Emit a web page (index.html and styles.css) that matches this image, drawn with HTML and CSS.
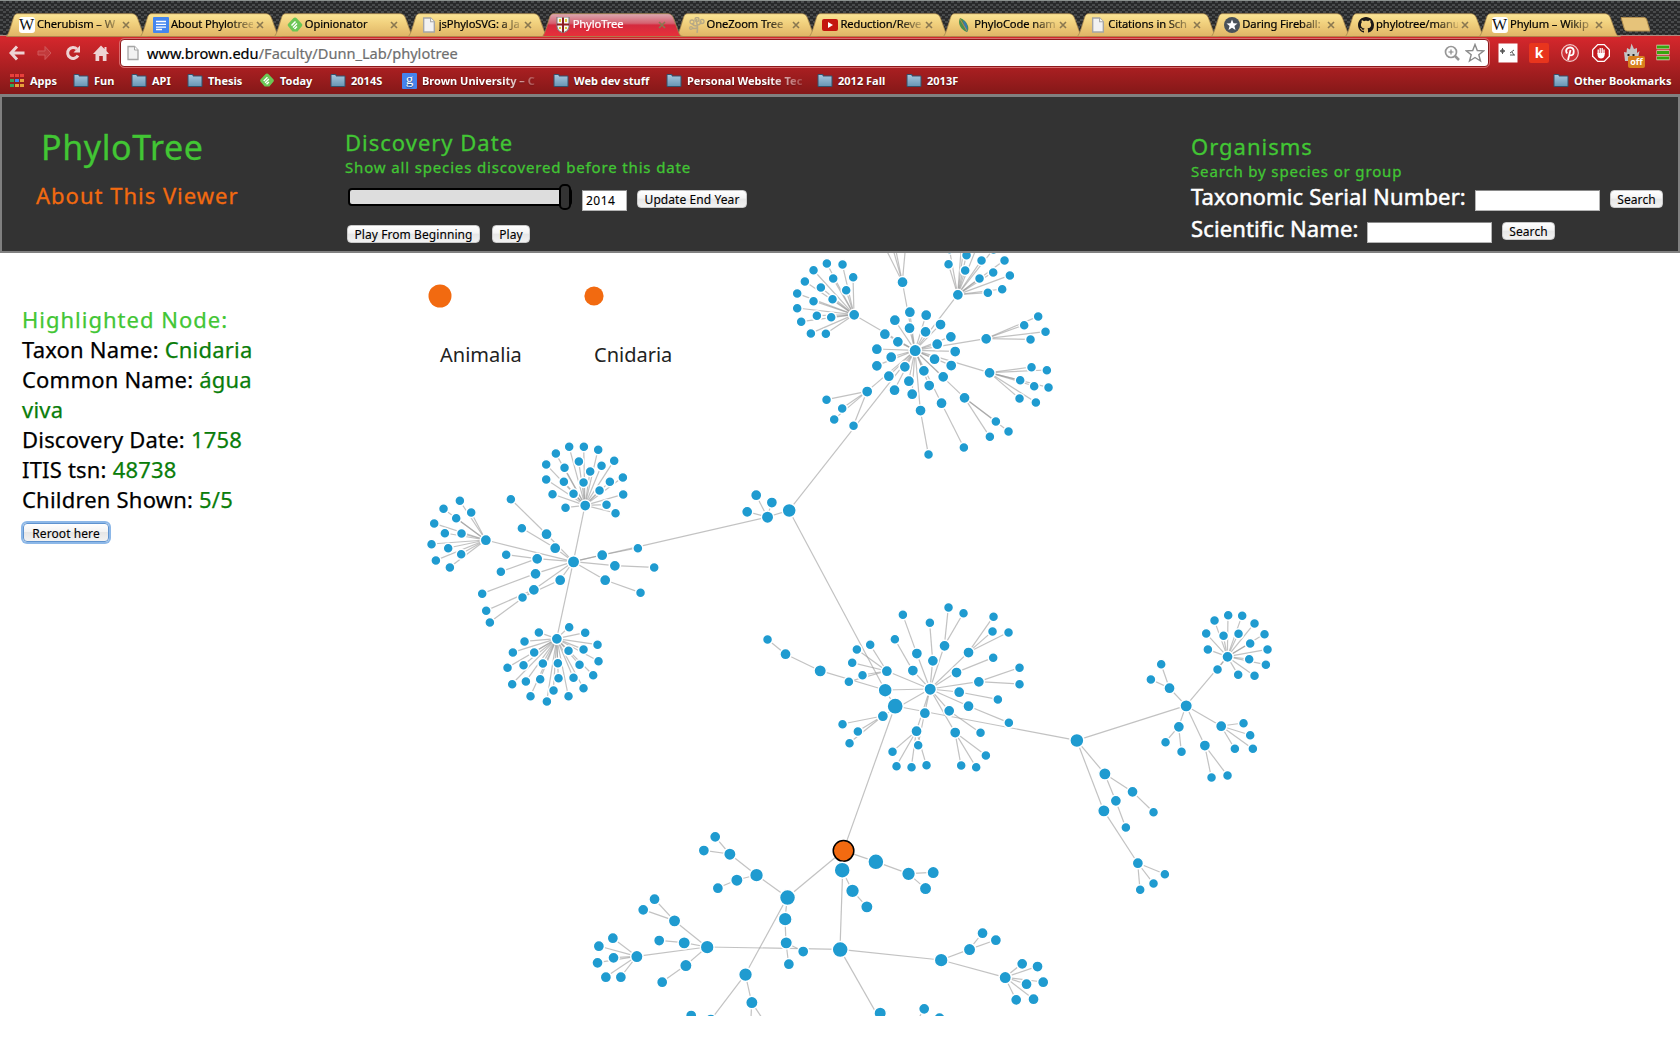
FILE: index.html
```html
<!DOCTYPE html>
<html lang="en">
<head>
<meta charset="utf-8">
<title>PhyloTree</title>
<link rel="stylesheet" href="styles.css">
</head>
<body>
<svg class="defs" width="0" height="0">
  <defs>
    <linearGradient id="gold" x1="0" y1="0" x2="0" y2="1"><stop offset="0" stop-color="#fbe596"/><stop offset=".45" stop-color="#f0cf7c"/><stop offset="1" stop-color="#dfb466"/></linearGradient>
    <linearGradient id="rose" x1="0" y1="0" x2="0" y2="1"><stop offset="0" stop-color="#dcaab2"/><stop offset=".42" stop-color="#d5606f"/><stop offset=".5" stop-color="#d42a3e"/><stop offset="1" stop-color="#e8303a"/></linearGradient>
    <linearGradient id="steel" x1="0" y1="0" x2="0" y2="1"><stop offset="0" stop-color="#a9c8dd"/><stop offset="1" stop-color="#6795b5"/></linearGradient>
    <symbol id="tab" viewBox="0 0 142 24"><path d="M.5 23.5 C3 20 4 16 6.500 8 C8 3 8.500 .7 12 .7 H125 C129 .7 130.500 2 132 6.500 L136.500 19 C137.500 22 139 23.500 141.500 23.500Z" stroke="#a8884e" stroke-width=".8"/></symbol>
    <symbol id="folder" viewBox="0 0 16 15"><path d="M1 3V1.500H6V3H15V13.500H1Z" fill="url(#steel)" stroke="#35516b"/></symbol>
    <symbol id="page" viewBox="0 0 12 15"><path d="M1 1H7.500L11 4.500V14H1Z" fill="#f2f2f2" stroke="#a5a5a5" stroke-width="1.300"/><path d="M7.500 1V4.500H11" fill="#fff" stroke="#a5a5a5"/></symbol>
    <symbol id="close" viewBox="0 0 8 8"><path d="M1 1L7 7M7 1L1 7" stroke="#8a7850" stroke-width="1.600"/></symbol>
    <symbol id="feedly" viewBox="0 0 16 16"><path d="M8 .5Q9 .5 9.700 1.300L15 7Q15.700 8 15 9L10.500 14.500H5.500L1 9Q.3 8 1 7L6.300 1.300Q7 .5 8 .5Z" fill="#6cc655"/><path d="M4.500 8.500L8.500 4.500M6 10.500L10 6.500M7.500 12L10 9.500" stroke="#fff" stroke-width="1.500"/></symbol>
  </defs>
</svg>

<header class="browser">
  <div class="tabs">
    <div class="tab"><svg class="shape"><use href="#tab"/></svg><span class="fav wiki">W</span><span class="label">Cherubism – W</span><svg class="close"><use href="#close"/></svg></div>
    <div class="tab"><svg class="shape"><use href="#tab"/></svg><svg class="fav" viewBox="0 0 16 16"><rect width="16" height="16" rx="1" fill="#4586ee"/><path d="M3 4.500H13M3 7.300H13M3 10.100H13M3 12.500H9" stroke="#fff" stroke-width="1.300"/></svg><span class="label">About Phylotree</span><svg class="close"><use href="#close"/></svg></div>
    <div class="tab"><svg class="shape"><use href="#tab"/></svg><svg class="fav"><use href="#feedly"/></svg><span class="label">Opinionator</span><svg class="close"><use href="#close"/></svg></div>
    <div class="tab"><svg class="shape"><use href="#tab"/></svg><svg class="fav"><use href="#page"/></svg><span class="label">jsPhyloSVG: a Ja</span><svg class="close"><use href="#close"/></svg></div>
    <div class="tab active"><svg class="shape"><use href="#tab"/></svg><svg class="fav" viewBox="0 0 16 16"><path d="M2 0H14V10Q14 14 8 16Q2 14 2 10Z" fill="#f6f6f0" stroke="#777"/><path d="M8 .5V15.500M2 7.500H14" stroke="#8e1f22" stroke-width="2"/><path d="M4 2H6V5H4ZM10 2H12V5H10ZM4 10H6V12H4ZM10 10H12V12H10Z" fill="#d8c838"/></svg><span class="label">PhyloTree</span><svg class="close"><use href="#close"/></svg></div>
    <div class="tab"><svg class="shape"><use href="#tab"/></svg><svg class="fav" viewBox="0 0 16 16"><path d="M8 16Q9 11 8 7M8 9Q4 9 3 6M8 8Q12 8 12 4M8 7Q7 4 8 2M3 11Q6 12 8 11" fill="none" stroke="#b7a986" stroke-width="1.500"/><g fill="none" stroke="#b7a986" stroke-width="1.300"><circle cx="3" cy="5" r="2"/><circle cx="8" cy="2.500" r="2"/><circle cx="13" cy="4.500" r="2"/><circle cx="2" cy="11" r="1.300"/></g></svg><span class="label">OneZoom Tree</span><svg class="close"><use href="#close"/></svg></div>
    <div class="tab"><svg class="shape"><use href="#tab"/></svg><svg class="fav" viewBox="0 0 16 16"><rect y="2" width="16" height="12" rx="2" fill="#c4160f"/><path d="M6 5L11 8L6 11Z" fill="#fff"/></svg><span class="label">Reduction/Reve</span><svg class="close"><use href="#close"/></svg></div>
    <div class="tab"><svg class="shape"><use href="#tab"/></svg><svg class="fav" viewBox="0 0 16 16"><path d="M4 1Q10 3 12 9Q13 13 11 15Q6 13 4 9Q2 5 4 1Z" fill="#4b8f4c"/><path d="M7 3Q13 7 11 15Q8 11 7 3Z" fill="#3a79ae"/><path d="M4 2L11 14" stroke="#bc8a4c"/></svg><span class="label">PhyloCode nam</span><svg class="close"><use href="#close"/></svg></div>
    <div class="tab"><svg class="shape"><use href="#tab"/></svg><svg class="fav"><use href="#page"/></svg><span class="label">Citations in Sch</span><svg class="close"><use href="#close"/></svg></div>
    <div class="tab"><svg class="shape"><use href="#tab"/></svg><svg class="fav" viewBox="0 0 16 16"><circle cx="8" cy="8" r="8" fill="#4a525a"/><path d="M8 2.500L9.500 6.300L13.500 6.500L10.400 9L11.500 13L8 10.700L4.500 13L5.600 9L2.500 6.500L6.500 6.300Z" fill="#fff"/></svg><span class="label">Daring Fireball:</span><svg class="close"><use href="#close"/></svg></div>
    <div class="tab"><svg class="shape"><use href="#tab"/></svg><svg class="fav" viewBox="0 0 16 16"><path fill="#1b1817" d="M8 0C3.580 0 0 3.580 0 8c0 3.540 2.290 6.530 5.470 7.590.4.070.55-.17.55-.38 0-.19-.01-.82-.01-1.490-2.010.37-2.530-.49-2.690-.94-.09-.23-.48-.94-.82-1.130-.28-.15-.68-.52-.01-.53.63-.01 1.080.58 1.230.82.72 1.210 1.870.87 2.330.66.070-.52.28-.87.51-1.070-1.780-.2-3.640-.89-3.640-3.950 0-.87.31-1.590.82-2.150-.08-.2-.36-1.020.08-2.120 0 0 .67-.21 2.200.82.64-.18 1.320-.27 2-.27s1.360.09 2 .27c1.530-1.040 2.200-.82 2.200-.82.44 1.100.16 1.920.08 2.120.51.56.82 1.270.82 2.150 0 3.070-1.870 3.750-3.650 3.950.29.25.54.73.54 1.480 0 1.070-.01 1.930-.01 2.200 0 .21.15.46.55.38A8.010 8.010 0 0 0 16 8c0-4.420-3.580-8-8-8z"/></svg><span class="label">phylotree/manu</span><svg class="close"><use href="#close"/></svg></div>
    <div class="tab"><svg class="shape"><use href="#tab"/></svg><span class="fav wiki">W</span><span class="label">Phylum – Wikip</span><svg class="close"><use href="#close"/></svg></div>
    <svg class="newtab" viewBox="0 0 31 15"><path d="M1 .5H24Q26 .5 26.700 2.500L30 14H7Q5 14 4.400 12Z" fill="#e6c37a" stroke="#b08d4e"/></svg>
  </div>

  <div class="toolbar">
    <svg class="tool" viewBox="0 0 16 16"><path d="M8 1.500L2 8L8 14.500M2.500 8H15.500" fill="none" stroke="#eed3d3" stroke-width="3"/></svg>
    <svg class="tool" viewBox="0 0 16 16"><path d="M8 1.500L14 8L8 14.500V10H1V6H8Z" fill="#c23a3c" stroke="#d0595b"/></svg>
    <svg class="tool" viewBox="0 0 16 16"><path d="M13 10.500A5.500 5.500 0 1 1 12 4" fill="none" stroke="#eed3d3" stroke-width="3"/><path d="M15 .5V7.500H8.500Z" fill="#eed3d3"/></svg>
    <svg class="tool" viewBox="0 0 16 16"><path d="M8 .5L11.500 4V2H13.500V6L16 9H13.500V16H9.800V11H6.200V16H2.500V9H0Z" fill="#eed3d3"/></svg>
    <div class="omnibox">
      <svg class="doc"><use href="#page"/></svg>
      <span class="url">www.brown.edu<span class="path">/Faculty/Dunn_Lab/phylotree</span></span>
      <svg class="zoomer" viewBox="0 0 16 16"><circle cx="7" cy="7" r="5.500" fill="none" stroke="#979797" stroke-width="1.700"/><path d="M11 11L15 15" stroke="#979797" stroke-width="2.500"/><path d="M4.500 7H9.500M7 4.500V9.500" stroke="#888" stroke-width="1.200"/></svg>
      <svg class="star" viewBox="0 0 20 20"><path d="M10 1.500L12.300 7.500L18.800 7.800L13.800 11.800L15.500 18L10 14.500L4.500 18L6.200 11.800L1.200 7.800L7.700 7.500Z" fill="#fff" stroke="#8b8b8b" stroke-width="1.400"/></svg>
    </div>
    <div class="extensions">
      <svg viewBox="0 0 20 20"><rect width="19" height="19" x=".5" y=".5" fill="#fff"/><path d="M2 8H7M4.500 5V11M3 7H6V9H3ZM12 10L16 7M12 12H17M14 9L16 12" stroke="#555" fill="none"/></svg>
      <span class="ext-k">k</span>
      <svg viewBox="0 0 20 20"><circle cx="10" cy="10" r="8.300" fill="#cf3138" stroke="#f1c8c8" stroke-width="1.200"/><path d="M8 17L10.500 7M7 10.500C4.500 6.500 8 4.300 10.500 4.500C15 5 14.500 12 11 12.300C10 12.400 9.500 12 9 11" fill="none" stroke="#fff" stroke-width="1.800"/></svg>
      <svg viewBox="0 0 20 20"><path d="M6.500 1H13.500L19 6.500V13.500L13.500 19H6.500L1 13.500V6.500Z" fill="#fff"/><path d="M7 2.300H13L17.700 7V13L13 17.700H7L2.300 13V7Z" fill="#c21a1e"/><path d="M7.200 6.500V11M9.200 5V11M11.200 5V11M13 6.500V11" fill="none" stroke="#fff" stroke-width="1.300"/><path d="M6.500 10H13.700V12Q13 15.500 10 15.500Q7 15.500 6.500 12Z" fill="#fff"/></svg>
      <div class="ghost"><svg viewBox="0 0 20 20"><path d="M3 18L2 9L4.500 9.500L5 5L8 6.500L9.500 .5L12 6L15 5V10L17.500 8L15.500 18Z" fill="#c4c4c4"/><path d="M5.500 11H7.500V13H5.500ZM10.500 11H12.500V13H10.500Z" fill="#222"/></svg><span class="badge">off</span></div>
      <svg viewBox="0 0 20 20"><path d="M3.500 4H16.500M3.500 9.500H16.500M3.500 15H16.500" stroke="#e4dcc6" stroke-width="4.300"/><path d="M4 4H16M4 9.500H16M4 15H16" stroke="#37a50f" stroke-width="3"/></svg>
    </div>
  </div>

  <nav class="bookmarks">
    <a class="mark"><svg viewBox="0 0 16 15"><path d="M1 1H5V4H1ZM6 1H10V4H6ZM11 1H15V4H11Z" fill="#e8403c"/><path d="M1 6H5V9H1ZM1 11H5V14H1Z" fill="#35a35c"/><path d="M6 6H10V9H6Z" fill="#3f86f0"/><path d="M11 6H15V9H11ZM6 11H10V14H6ZM11 11H15V14H11Z" fill="#e6a13c"/></svg><span>Apps</span></a>
    <a class="mark"><svg><use href="#folder"/></svg><span>Fun</span></a>
    <a class="mark"><svg><use href="#folder"/></svg><span>API</span></a>
    <a class="mark"><svg><use href="#folder"/></svg><span>Thesis</span></a>
    <a class="mark"><svg><use href="#feedly"/></svg><span>Today</span></a>
    <a class="mark"><svg><use href="#folder"/></svg><span>2014S</span></a>
    <a class="mark"><span class="google">g</span><span class="fade">Brown University – C</span></a>
    <a class="mark"><svg><use href="#folder"/></svg><span>Web dev stuff</span></a>
    <a class="mark"><svg><use href="#folder"/></svg><span class="fade">Personal Website Tec</span></a>
    <a class="mark"><svg><use href="#folder"/></svg><span>2012 Fall</span></a>
    <a class="mark"><svg><use href="#folder"/></svg><span>2013F</span></a>
    <a class="mark other"><svg><use href="#folder"/></svg><span>Other Bookmarks</span></a>
  </nav>
</header>

<section class="controls">
  <div class="brand">
    <h1 class="title">PhyloTree</h1>
    <a class="about">About This Viewer</a>
  </div>
  <div class="dates">
    <h2 class="heading">Discovery Date</h2>
    <p class="hint">Show all species discovered before this date</p>
    <div class="range">
      <div class="slider"><span class="handle"></span></div>
      <div class="field year">2014</div>
      <button class="btn update">Update End Year</button>
    </div>
    <div class="play">
      <button class="btn begin">Play From Beginning</button>
      <button class="btn go">Play</button>
    </div>
  </div>
  <div class="organisms">
    <h2 class="heading">Organisms</h2>
    <p class="hint">Search by species or group</p>
    <div class="search"><span class="tsn">Taxonomic Serial Number:</span><div class="field"></div><button class="btn">Search</button></div>
    <div class="search"><span class="sci">Scientific Name:</span><div class="field"></div><button class="btn">Search</button></div>
  </div>
</section>

<main class="viewer">
  <aside class="details">
    <h2 class="heading">Highlighted Node:</h2>
    <p>Taxon Name: <em>Cnidaria</em></p>
    <p>Common Name: <em>água viva</em></p>
    <p>Discovery Date: <em>1758</em></p>
    <p>ITIS tsn: <em>48738</em></p>
    <p>Children Shown: <em>5/5</em></p>
    <button class="btn focus">Reroot here</button>
  </aside>
  <svg class="tree" viewBox="270 253 1410 763"></svg>
</main>
<script src="tree.js"></script>
</body>
</html>
```
FILE: styles.css
```css
* { box-sizing: border-box; }
body { margin: 0; width: 1680px; height: 1050px; overflow: hidden; background: #fff; color: #000; font-family: "Noto Sans", "Open Sans", sans-serif; }
h1, h2, p { margin: 0; font-weight: 400; }
.defs { position: absolute; }

.browser { height: 94px; background: linear-gradient(#d4272c 36px, #d4272c 38px, #841818 94px); }
.tabs { display: flex; height: 36px; padding: 12px 0 0 6px; border-top: 1px solid #8b918e; border-bottom: 1px solid #b08a80; background: conic-gradient(#484a4b 25%, #292a2b 0 50%, #484a4b 0 75%, #292a2b 0) 0 0 / 6px 5px; }
.tab { display: grid; grid-template-columns: 16px 84px 8px; align-items: center; flex: none; width: 142px; height: 23px; padding-left: 13px; margin-right: -8.100px; font-size: 11.200px; letter-spacing: -.1px; }
.tab > * { grid-row: 1; }
.shape { grid-column: 1 / 4; width: 142px; height: 24px; margin-left: -13px; fill: url(#gold); }
.active { z-index: 1; color: #fff; }
.active .shape { fill: url(#rose); }
.fav { grid-column: 1; z-index: 1; width: 16px; height: 16px; }
.wiki { border-radius: 3px; background: #fff; font: 16px/16px "Liberation Serif", serif; letter-spacing: -1px; color: #111; }
.label { grid-column: 2; z-index: 1; margin: -2px 0 0 2px; white-space: nowrap; line-height: 20px; -webkit-text-stroke: .2px; -webkit-mask-image: linear-gradient(90deg, #000 58px, rgba(0,0,0,.15) 82px); mask-image: linear-gradient(90deg, #000 58px, rgba(0,0,0,.15) 82px); }
.close { grid-column: 3; z-index: 1; width: 8px; height: 8px; margin-left: 3px; }
.newtab { flex: none; width: 31px; height: 15px; margin: 4px 0 0 7px; }

.toolbar { display: flex; align-items: center; height: 34px; padding-left: 9px; }
.tool { width: 16px; height: 16px; margin-right: 12px; }
.omnibox { display: flex; align-items: center; width: 1369px; height: 28px; margin-left: -1px; padding-left: 6px; border: 1px solid #8c1a1c; outline: 1px solid #d86a6c; outline-offset: -0.500px; border-radius: 4px; background: #fff; }
.doc { width: 12px; height: 16px; }
.url { margin-left: 8px; font-size: 14.600px; line-height: 24px; -webkit-text-stroke: .2px; }
.path { color: #6f6f6f; }
.zoomer { width: 16px; height: 16px; margin-left: auto; }
.star { width: 20px; height: 20px; margin: 0 3px 0 5px; }
.extensions { display: flex; align-items: center; gap: 11px; margin-left: 9px; }
.extensions svg { display: block; width: 20px; height: 20px; }
.ext-k { width: 20px; height: 20px; border-radius: 2px; background: #e8351d; color: #fff; font: bold 14px/19px "Open Sans", sans-serif; text-align: center; }
.ghost { position: relative; }
.badge { position: absolute; left: 6px; top: 13px; width: 17px; height: 12px; border-radius: 2px; background: #d87f1d; color: #fff; font: bold 9px/11px "Open Sans", sans-serif; text-align: center; }

.bookmarks { display: grid; grid-template-columns: 64px 58px 56px 72px 71px 72px 151px 113px 151px 89px 647px 120px; height: 21px; padding-left: 9px; align-items: center; color: #fff; font-size: 11px; font-weight: 700; }
.mark { display: flex; align-items: center; gap: 5px; white-space: nowrap; text-shadow: 0 1px 1px rgba(0,0,0,.5); }
.mark svg { width: 16px; height: 15px; }
.google { width: 15px; height: 16px; border-radius: 1px; background: #4583ee; font: 15px/13px "Liberation Serif", serif; text-align: center; }
.fade { -webkit-mask-image: linear-gradient(90deg, #000 72%, rgba(0,0,0,.2)); mask-image: linear-gradient(90deg, #000 72%, rgba(0,0,0,.2)); }

.controls { display: flex; height: 159px; border: 2px solid #808080; border-top-width: 3px; background: #333; -webkit-text-stroke: .3px; }
.brand { width: 343px; padding: 27px 0 0 34px; }
.title { padding-left: 5px; font-size: 34px; line-height: 46px; letter-spacing: .6px; color: #42c634; }
.about { display: block; margin-top: 10px; font-size: 22px; line-height: 30px; letter-spacing: 1px; color: #f26a10; }
.heading { font-size: 22px; line-height: 30px; letter-spacing: 1px; color: #42c634; }
.hint { font-size: 15px; line-height: 21px; letter-spacing: .85px; color: #42c634; }
.dates { width: 846px; padding-top: 30px; }
.range { display: flex; margin-top: 6px; height: 27px; }
.slider { position: relative; width: 224px; height: 18px; margin: 4px 0 0 3px; border: 2px solid #000; border-right-width: 9px; border-radius: 4px; background: #ddd; }
.handle { position: absolute; left: 209px; top: -6px; width: 12px; height: 26px; border: 2px solid #000; border-radius: 5px; background: #333; }
.field { width: 125px; height: 21px; border: 1px solid #b4b4b4; border-top-color: #8a8a8a; background: #fff; }
.year { width: 45px; margin: 6px 0 0 10px; padding-left: 3px; font-size: 12px; line-height: 19px; letter-spacing: .5px; -webkit-text-stroke: .1px; }
.btn { flex: none; height: 18px; padding: 1px 0 0; border: 1px solid #c9c9c9; border-radius: 4px; background: linear-gradient(#fff, #f3f3f3 45%, #e6e6e6 50%, #f2f2f2); color: #000; font: 12px/15px "Noto Sans", sans-serif; letter-spacing: .08px; white-space: nowrap; -webkit-text-stroke: .1px; }
.update { width: 110px; margin: 6px 0 0 10px; }
.play { display: flex; gap: 12px; margin: 14px 0 0 2px; }
.begin { width: 133px; }
.go { width: 38px; }
.organisms { padding-top: 34px; }
.search { display: flex; height: 32px; color: #fff; font-size: 22px; line-height: 30px; letter-spacing: .14px; -webkit-text-stroke: .5px; }
.hint + .search { margin-top: -1px; }
.search .field { margin: 9px 10px 0 9px; }
.search .btn { width: 53px; margin-top: 9px; }
.tsn { width: 275px; white-space: nowrap; }
.sci { width: 167px; white-space: nowrap; }

.viewer { display: flex; height: 763px; }
.details { width: 270px; padding: 51px 0 0 22px; font-size: 22px; line-height: 30px; -webkit-text-stroke: .25px; }
.details p { width: 240px; letter-spacing: .2px; }
.details em { font-style: normal; color: #0a7d0a; }
.focus { display: block; width: 86px; height: 19px; margin: 9px 0 0 1px; border-color: #5f93cf; box-shadow: 0 0 0 2px #8db8e8; }
.tree { width: 1410px; height: 763px; overflow: hidden; }
.tree line { stroke: #999; stroke-opacity: .6; stroke-width: 1.200px; }
.tree circle { fill: #1f9bd0; stroke: #fff; stroke-width: 1.500px; }
.tree .root { fill: #f26a10; stroke: #000; }
.tree .crumb { fill: #f26a10; stroke: none; }
.tree text { font-size: 20px; fill: #222; -webkit-text-stroke: 0; }
```
FILE: tree.js
```js
// Each clade lists its hubs in local units (a third of a pixel) from its origin.
// Hub row: id, parent id, x, y, radius, leaves "x,y x,y ...", leaf radius.
var clades = [
  { at: [750, 590], hubs: [
    ['root', '', 435, 348, 7.5, '', 0],
    ['m1', 'root', 405, 300, 6.4, '', 0],
    ['f', 'm1', 540, 297, 5.6, '', 0],
    ['c1', 'm1', 210, 242, 5.6, '', 0],
    ['c2', 'c1', 106, 192, 5, '52,148', 4.4],
    ['f1', 'f', 410, 243, 5, '320,178 360,164 306,218 337,255 296,275', 4.4],
    ['f2', 'f', 500, 190, 5, '458,74', 4.4],
    ['f3', 'f', 548, 212, 5, '539,98', 4.4],
    ['f4', 'f', 488, 241, 5, '434,147', 4.4],
    ['f5', 'f', 583, 167, 5, '595,52 640,69', 4.4],
    ['f6', 'f', 655, 187, 5, '730,80 727,124 775,127', 4.4],
    ['f7', 'f', 619, 247, 5, '729,203', 4.4],
    ['f8', 'f', 686, 275, 5, '808,233 808,282', 4.4],
    ['f9', 'f', 627, 306, 5, '743,328', 4.4],
    ['f10', 'f', 655, 348, 5, '776,398', 4.4],
    ['f11', 'f', 597, 362, 5, '691,428', 4.4],
    ['f12', 'f', 615, 427, 5, '633,526 678,531 707,496', 4.4],
    ['f13', 'f', 524, 369, 5, '504,465', 4.4],
    ['f14', 'f', 499, 423, 5, '427,485 439,528 484,531 529,525', 4.4],
    ['f15', 'f', 398, 378, 5, '277,402 323,424 298,459', 4.4]
  ] },
  { at: [720, 240], hubs: [
    ['h', 'm1', 207, 811, 6.4, '', 0],
    ['c', 'h', 585, 331, 5.6, '569,216 618,225 524,240 568,264 661,253 616,275 494,282 533,305 692,290 651,312 470,327 705,334 513,351 643,357 470,377 554,380 693,376 506,408 611,392 669,410 566,423 627,436 523,450 576,462', 5],
    ['t1', 'c', 402, 224, 5, '320,70 280,90 367,73 254,124 399,111 339,115 302,142 378,150 231,160 280,183 337,177 231,204 290,227 333,231 243,245 272,280 317,281', 4.4],
    ['t2', 'c', 547, 126, 5, '454,-60 495,-58 509,-60 564,-60', 4.4],
    ['t3', 'c', 713, 164, 5, '739,45 784,61 853,61 685,72 735,91 819,97 778,115 869,106 803,158 846,147 820,28 688,27 730,-60 737,-20 788,-22', 4.4],
    ['t4', 'c', 798, 296, 5, '954,229 912,255 976,275 931,298', 4.4],
    ['t5', 'c', 808, 398, 5, '934,381 980,390 900,420 942,438 985,442 898,475 947,487', 4.4],
    ['t6', 'c', 733, 473, 5, '827,544 865,574 809,590', 4.4],
    ['t7', 'c', 664, 489, 5, '731,622', 4.4],
    ['t8', 'c', 601, 511, 5, '625,643', 4.4],
    ['t9', 'c', 441, 454, 5, '319,479 366,505 342,538 400,557', 4.4],
    ['p', 'h', 142, 831, 5.6, '108,765 155,787 81,815', 5]
  ] },
  { at: [410, 420], hubs: [
    ['e', 'p', 490, 425, 5.6, '', 0],
    ['e1', 'e', 525, 256, 5, '477,80 521,80 564,89 437,100 408,133 463,143 506,124 540,154 574,137 612,122 408,178 461,185 520,187 599,185 638,172 427,222 490,221 568,211 639,223 589,254 466,263 616,279', 4.4],
    ['e2', 'e', 227, 360, 5, '149,242 100,266 183,277 138,294 72,310 104,339 154,340 64,372 114,384 153,402 77,421 119,442', 4.4],
    ['e3', 'e', 409, 342, 5, '302,237', 4.4],
    ['e4', 'e', 435, 384, 5, '335,324', 4.4],
    ['e5', 'e', 381, 416, 5, '288,404 272,455', 4.4],
    ['e6', 'e', 376, 461, 5, '216,521', 4.4],
    ['e7', 'e', 371, 509, 5, '228,572 239,607', 4.4],
    ['e8', 'e', 450, 480, 5, '337,532', 4.4],
    ['e9', 'e', 576, 405, 5, '683,384', 4.4],
    ['e10', 'e', 614, 437, 5, '732,442', 4.4],
    ['e11', 'e', 585, 480, 5, '691,518', 4.4],
    ['e12', 'e', 440, 656, 5, '477,621 386,637 525,638 343,664 562,674 308,697 372,697 475,692 520,688 565,723 292,743 340,735 398,730 443,729 508,734 549,765 306,792 347,784 390,777 445,774 490,773 430,811 520,804 361,828 410,844 475,828', 4.4]
  ] },
  { at: [1060, 590], hubs: [
    ['r', 'root', 50, 451, 6.4, '', 0],
    ['s', 'r', 378, 347, 5.6, '', 0],
    ['s1', 's', 502, 200, 5, '463,91 504,75 546,77 583,100 438,130 490,137 535,131 613,132 570,160 443,178 622,178 567,207 617,224 534,254 583,257 472,238', 4.4],
    ['s2', 's', 328, 294, 5, '303,222 272,268', 4.4],
    ['s3', 's', 356, 410, 5, '316,456 364,485', 4.4],
    ['s4', 's', 434, 466, 5, '454,562 502,556', 4.4],
    ['s5', 's', 483, 408, 5, '550,399 570,435 524,476 578,476', 4.4],
    ['u', 'r', 134, 551, 5.6, '', 0],
    ['u1', 'u', 217, 605, 5, '280,666', 4.4],
    ['u2', 'u', 167, 632, 5, '197,712', 4.4],
    ['v', 'r', 131, 662, 5.6, '', 0],
    ['v1', 'v', 233, 819, 5, '240,899 280,880 314,852', 4.4]
  ] },
  { at: [580, 810], hubs: [
    ['cnidaria', 'root', 790, 122, 9.7, '', 0],
    ['k1', 'cnidaria', 887, 155, 7.4, '', 0],
    ['k2', 'k1', 985, 191, 6.3, '1059,187 1036,235', 5.6],
    ['k3', 'cnidaria', 786, 180, 7.4, '', 0],
    ['k4', 'k3', 817, 242, 6.3, '860,290', 5.6],
    ['w', 'cnidaria', 622, 262, 7.4, '', 0],
    ['w1', 'w', 529, 195, 6.3, '', 0],
    ['w2', 'w1', 449, 132, 5.6, '405,80 371,121', 5],
    ['w3', 'w1', 470, 210, 5.6, '413,234', 5],
    ['w4', 'w', 615, 327, 6.3, '', 0],
    ['w5', 'w4', 618, 398, 5.6, '669,424 626,462', 5],
    ['w6', 'w', 496, 493, 6.3, '', 0],
    ['w7', 'w6', 515, 577, 5.6, '511,670 570,660', 5],
    ['w8', 'w6', 392, 630, 5.6, '333,616', 5],
    ['y', 'cnidaria', 780, 418, 7.4, '', 0],
    ['y1', 'y', 381, 411, 6.3, '', 0],
    ['y2', 'y1', 283, 332, 5.6, '223,267 189,299', 5],
    ['y3', 'y1', 312, 398, 5.6, '237,391', 5],
    ['y4', 'y1', 317, 466, 5.6, '246,516', 5],
    ['y5', 'y1', 170, 439, 5.6, '98,384 56,408 52,458 100,443 77,501 122,501', 5],
    ['y6', 'y', 1083, 450, 6.3, '', 0],
    ['y7', 'y6', 1168, 418, 5.6, '1207,369 1247,390', 5],
    ['y8', 'y6', 1275, 502, 5.6, '1326,461 1372,469 1389,516 1339,522 1308,569 1360,567', 5],
    ['y9', 'y', 912, 650, 6.3, '', 0],
    ['y10', 'y9', 900, 609, 5.6, '', 0],
    ['y11', 'y9', 1000, 655, 5.6, '1032,596 1078,624', 5]
  ] }
];

var svg = document.querySelector('.tree');
var hubs = {};
var links = [];
var dots = [];

function draw(name, attrs) {
  var el = document.createElementNS('http://www.w3.org/2000/svg', name);
  Object.keys(attrs).forEach(function (k) { el.setAttribute(k, attrs[k]); });
  svg.appendChild(el);
  return el;
}

clades.forEach(function (clade) {
  function place(x, y, r) { return { x: clade.at[0] + x / 3, y: clade.at[1] + y / 3, r: r }; }
  clade.hubs.forEach(function (h) {
    var node = place(h[2], h[3], h[4]);
    node.id = h[0];
    hubs[h[0]] = node;
    dots.push(node);
    if (h[1]) links.push([hubs[h[1]], node]);
    if (!h[5]) return;
    h[5].split(' ').forEach(function (pair) {
      var xy = pair.split(',');
      var leaf = place(+xy[0], +xy[1], h[6]);
      dots.push(leaf);
      links.push([node, leaf]);
    });
  });
});

links.forEach(function (l) {
  draw('line', { x1: l[0].x, y1: l[0].y, x2: l[1].x, y2: l[1].y });
});
dots.forEach(function (d) {
  draw('circle', { cx: d.x + 0.2, cy: d.y + 0.2, r: d.r + 0.6, 'class': d.id === 'cnidaria' ? 'root' : 'node' });
});

// Path from the tree's top group down to the highlighted node.
[['Animalia', 440, 11.5], ['Cnidaria', 594, 9.6]].forEach(function (c) {
  draw('circle', { cx: c[1], cy: 296, r: c[2], 'class': 'crumb' });
  draw('text', { x: c[1], y: 362 }).textContent = c[0];
});
```
